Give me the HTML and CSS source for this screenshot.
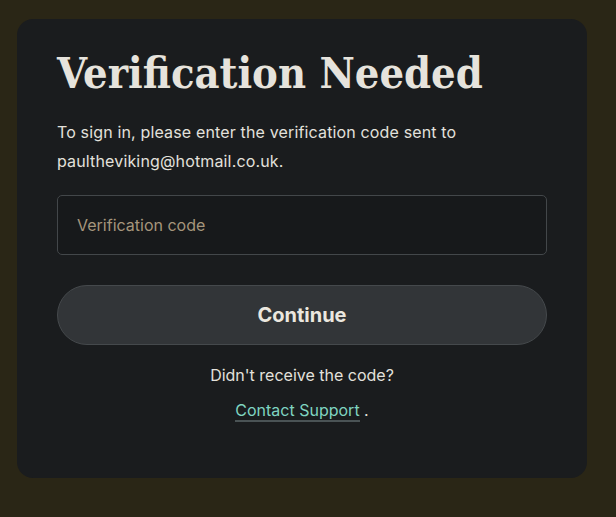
FILE: index.html
```html
<!DOCTYPE html>
<html lang="en">
<head>
  <meta charset="UTF-8">
  <meta name="viewport" content="width=device-width, initial-scale=1.0">
  <title>Verification Needed</title>
  <link rel="stylesheet" href="styles.css">
</head>
<body>
  <div class="card">
    <h1>Verification Needed</h1>
    <p class="intro">To sign in, please enter the verification code sent to paultheviking@hotmail.co.uk.</p>

    <input class="code-input" type="text" placeholder="Verification code">

    <button class="btn-continue">Continue</button>

    <p class="help">Didn't receive the code?</p>
    <p class="help"><a href="#" class="support-link">Contact Support</a> .</p>
  </div>
</body>
</html>
```

FILE: styles.css
```css
body {
  margin: 0;
  background-color: #2a2616;
  font-family: Inter, "Noto Sans", sans-serif;
  color: #e3e1dc;
}

.card {
  width: 490px;
  margin: 19px 0 0 17px;
  padding: 29px 40px 58px;
  background-color: #1a1c1e;
  border-radius: 16px;
}

h1 {
  margin: 0 0 20px;
  font-family: "DejaVu Serif", "Liberation Serif", serif;
  font-stretch: condensed;
  font-size: 43px;
  font-weight: bold;
  color: #e6e3dc;
}

.intro {
  margin: 0 0 19px;
  font-size: 16px;
  letter-spacing: 0.15px;
  line-height: 29px;
}

.code-input {
  display: block;
  box-sizing: border-box;
  width: 100%;
  height: 60px;
  padding: 0 19px;
  background-color: #17191b;
  border: 1px solid #43474a;
  border-radius: 5px;
  font-family: inherit;
  font-size: 16px;
  color: #e3e1dc;
}

.code-input::placeholder {
  color: #a5957c;
}

.btn-continue {
  display: block;
  box-sizing: border-box;
  width: 100%;
  height: 60px;
  margin-top: 30px;
  background-color: #323538;
  border: 1px solid #45494c;
  border-radius: 30px;
  font-family: inherit;
  font-size: 20px;
  font-weight: bold;
  color: #ebe7df;
  cursor: pointer;
}

.help {
  margin: 20px 0 0;
  text-align: center;
  font-size: 16px;
  line-height: 20px;
}

.help + .help {
  margin-top: 15px;
}

.support-link {
  color: #7fd4c1;
  text-decoration: none;
  border-bottom: 2px solid #4a5355;
}
```
